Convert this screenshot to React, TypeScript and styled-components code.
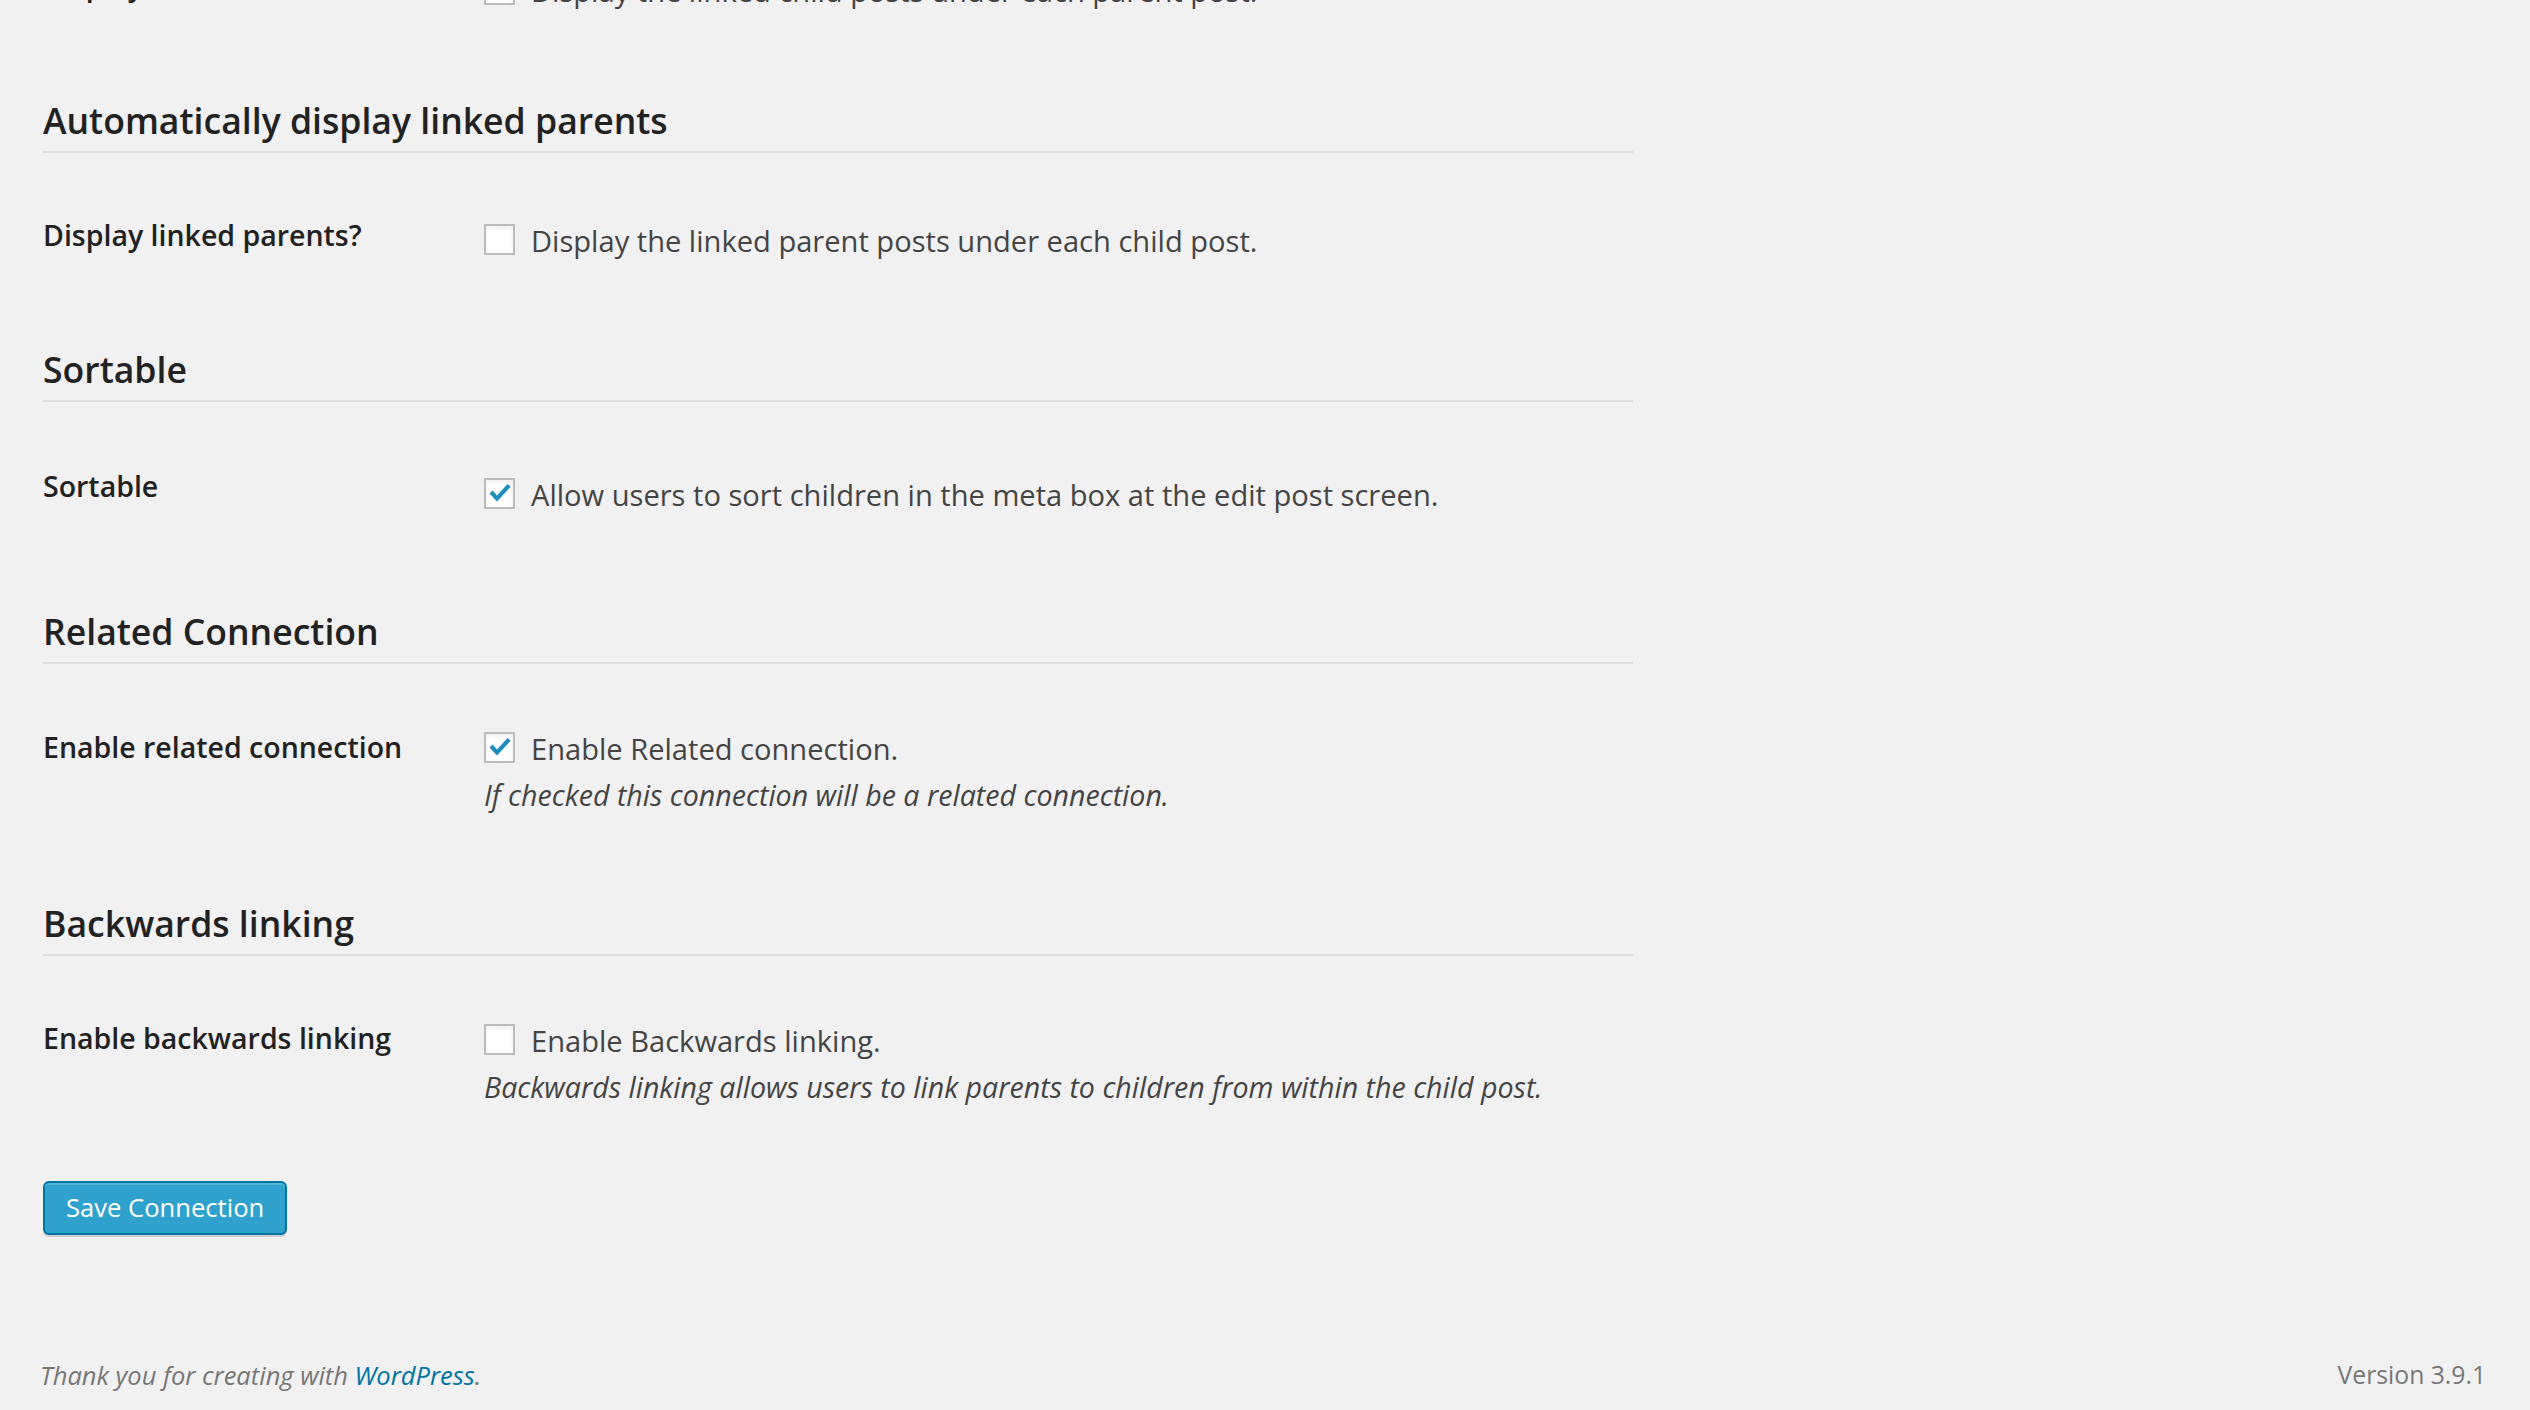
import React from "react";
import styled, { createGlobalStyle } from "styled-components";

const GlobalStyle = createGlobalStyle`
  html, body {
    margin: 0;
    padding: 0;
    background: #f1f1f1;
  }
  body {
    font-family: "Open Sans", "Noto Sans", "Liberation Sans", sans-serif;
    color: #444;
    overflow: hidden;
  }
`;

const Screen = styled.div`
  width: 2530px;
  height: 1410px;
  overflow: hidden;
  display: flex;
  flex-direction: column;
  background: #f1f1f1;
`;

const Content = styled.main`
  flex: none;
  width: 1590px;
  padding-left: 43px;
  display: flex;
  flex-direction: column;
`;

const Section = styled.section<{ $top: number }>`
  margin-top: ${(p) => p.$top}px;
  display: flex;
  flex-direction: column;
`;

const SectionTitle = styled.h3`
  margin: 0;
  padding-bottom: 7px;
  border-bottom: 2px solid #dedede;
  font-size: 35.6px;
  line-height: 48px;
  font-weight: 600;
  color: #222;
`;

const FormRow = styled.div<{ $gap: number }>`
  margin-top: ${(p) => p.$gap}px;
  display: grid;
  grid-template-columns: 441px 1fr;
  align-items: start;
`;

const RowLabel = styled.div<{ $shift: number }>`
  margin-top: ${(p) => p.$shift}px;
  font-size: 28.5px;
  line-height: 40px;
  font-weight: 600;
  color: #222;
`;

const Field = styled.div`
  display: flex;
  flex-direction: column;
`;

const CheckLine = styled.label`
  display: flex;
  align-items: flex-start;
  gap: 16px;
  font-size: 29.1px;
  line-height: 40px;
  color: #444;
`;

const Box = styled.span`
  flex: none;
  box-sizing: border-box;
  width: 31px;
  height: 31px;
  margin-top: 3px;
  border: 2px solid #bcbcbc;
  background: #fff;
  box-shadow: inset 0 2px 4px rgba(0, 0, 0, 0.07);
  display: flex;
  align-items: center;
  justify-content: center;
`;

const Description = styled.p`
  margin: 6px 0 0;
  font-size: 28.6px;
  line-height: 40px;
  font-style: italic;
  color: #444;
`;

const SaveButton = styled.button`
  align-self: flex-start;
  margin-top: 74px;
  box-sizing: border-box;
  height: 54px;
  padding: 0 21px;
  border: 2px solid #0074a2;
  border-radius: 6px;
  background: #2ea2cc;
  box-shadow: inset 0 2px 0 rgba(120, 200, 230, 0.5), 0 2px 0 rgba(0, 0, 0, 0.15);
  color: #fff;
  font-family: "Open Sans", "Noto Sans", sans-serif;
  font-size: 25.6px;
  line-height: 50px;
  font-weight: 400;
`;

const Footer = styled.footer`
  margin-top: 122px;
  display: flex;
  justify-content: space-between;
  padding: 0 44px 0 40px;
  font-size: 25.5px;
  line-height: 36px;
  color: #777;
`;

const Thanks = styled.p`
  margin: 0;
  font-style: italic;
`;

const FooterLink = styled.a`
  color: #0074a2;
  text-decoration: none;
`;

const Version = styled.p`
  margin: 0;
  font-size: 24.7px;
`;

const Check = () => (
  <svg width="24" height="22" viewBox="0 0 24 22" aria-hidden="true">
    <path
      d="M1.5 10.5 L4.6 7.6 L9 12.4 L19.6 1 L22.6 3.8 L9 18.6 Z"
      fill="#1e8cbe"
    />
  </svg>
);

type Opt = {
  label: string;
  text: string;
  checked?: boolean;
  desc?: string;
  gap: number;
  shift: number;
};

const OptionRow = ({ label, text, checked, desc, gap, shift }: Opt) => (
  <FormRow $gap={gap}>
    <RowLabel $shift={shift}>{label}</RowLabel>
    <Field>
      <CheckLine>
        <Box>{checked ? <Check /> : null}</Box>
        <span>{text}</span>
      </CheckLine>
      {desc ? <Description>{desc}</Description> : null}
    </Field>
  </FormRow>
);

const sections = [
  {
    title: "Automatically display linked parents",
    top: 85,
    row: {
      label: "Display linked parents?",
      text: "Display the linked parent posts under each child post.",
      gap: 68,
      shift: -6,
    },
  },
  {
    title: "Sortable",
    top: 84,
    row: {
      label: "Sortable",
      text: "Allow users to sort children in the meta box at the edit post screen.",
      checked: true,
      gap: 73,
      shift: -9,
    },
  },
  {
    title: "Related Connection",
    top: 92,
    row: {
      label: "Enable related connection",
      text: "Enable Related connection.",
      checked: true,
      desc: "If checked this connection will be a related connection.",
      gap: 65,
      shift: -2,
    },
  },
  {
    title: "Backwards linking",
    top: 84,
    row: {
      label: "Enable backwards linking",
      text: "Enable Backwards linking.",
      desc: "Backwards linking allows users to link parents to children from within the child post.",
      gap: 65,
      shift: -3,
    },
  },
];

export default function App() {
  return (
    <>
      <GlobalStyle />
      <Screen>
        <Content>
          <OptionRow
            label="Display linked children?"
            text="Display the linked child posts under each parent post."
            gap={-29}
            shift={-6}
          />
          {sections.map((s) => (
            <Section key={s.title} $top={s.top}>
              <SectionTitle>{s.title}</SectionTitle>
              <OptionRow {...s.row} />
            </Section>
          ))}
          <SaveButton type="button">Save Connection</SaveButton>
        </Content>
        <Footer>
          <Thanks>
            Thank you for creating with <FooterLink href="#">WordPress</FooterLink>.
          </Thanks>
          <Version>Version 3.9.1</Version>
        </Footer>
      </Screen>
    </>
  );
}
